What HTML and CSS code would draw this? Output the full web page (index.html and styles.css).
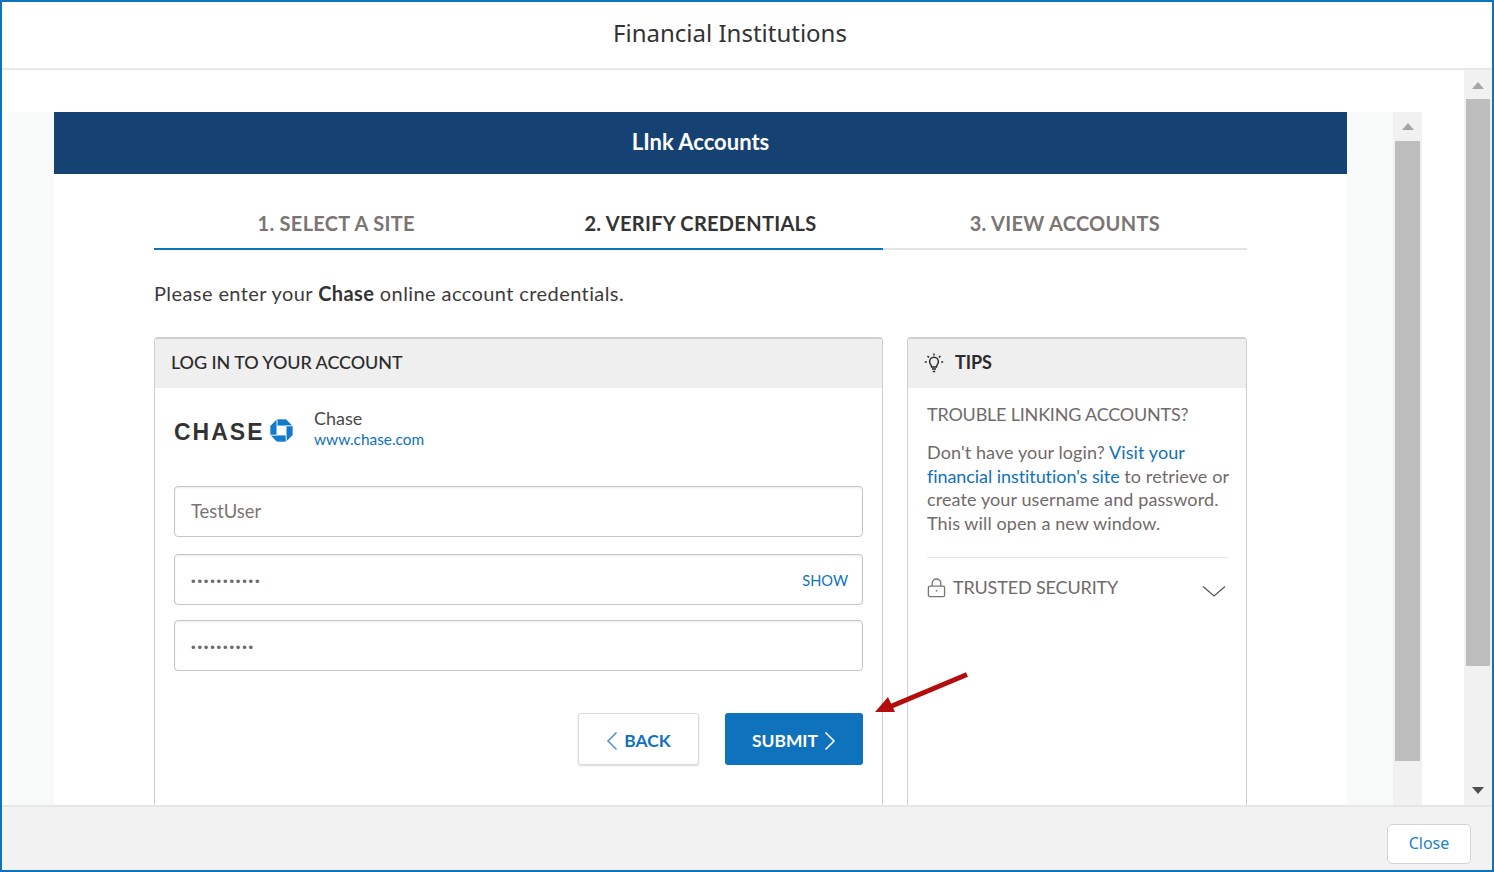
FILE: index.html
```html
<!DOCTYPE html>
<html lang="en">
<head>
<meta charset="utf-8">
<title>Financial Institutions</title>
<link rel="stylesheet" href="styles.css">
</head>
<body>
<div class="window">
  <header class="title"><h1>Financial Institutions</h1></header>
  <div class="main">
    <div class="view">
      <div class="frame">
        <div class="gutter">
          <div class="page">
            <div class="banner">LInk Accounts</div>
            <div class="tabs">
              <div class="tab done">1. SELECT A SITE</div>
              <div class="tab current">2. VERIFY CREDENTIALS</div>
              <div class="tab todo">3. VIEW ACCOUNTS</div>
            </div>
            <p class="lead">Please enter your <b>Chase</b> online account credentials.</p>
            <div class="columns">
              <section class="card login">
                <div class="card-head">LOG IN TO YOUR ACCOUNT</div>
                <div class="bank">
                  <div class="logo">
                    <span class="wordmark">CHASE</span>
                    <svg class="octagon" viewBox="0 0 100 100" aria-hidden="true">
                      <g fill="#117aca" stroke="#fff" stroke-width="3">
                        <polygon points="30,0 70,0 100,30 70,30 30,30"/>
                        <polygon points="100,30 100,70 70,100 70,70 70,30"/>
                        <polygon points="70,100 30,100 0,70 30,70 70,70"/>
                        <polygon points="0,70 0,30 30,0 30,30 30,70"/>
                      </g>
                    </svg>
                  </div>
                  <div class="bank-text">
                    <div class="bank-name">Chase</div>
                    <a class="bank-url">www.chase.com</a>
                  </div>
                </div>
                <div class="field first">TestUser</div>
                <div class="field second"><span class="dots">•••••••••••</span><a class="show">SHOW</a></div>
                <div class="field third"><span class="dots">••••••••••</span></div>
                <div class="actions">
                  <button class="btn back">
                    <svg class="chev" viewBox="0 0 12 20" aria-hidden="true"><path d="M10.5 1.5 2 10l8.500 8.500" fill="none" stroke="#5a93c9" stroke-width="1.600"/></svg>
                    BACK
                  </button>
                  <button class="btn submit">
                    SUBMIT
                    <svg class="chev" viewBox="0 0 12 20" aria-hidden="true"><path d="M1.500 1.500 10 10l-8.500 8.500" fill="none" stroke="#fff" stroke-width="1.600"/></svg>
                  </button>
                </div>
              </section>
              <aside class="card tips">
                <div class="card-head tips-head">
                  <svg class="bulb" viewBox="0 0 20 20" aria-hidden="true">
                    <g fill="none" stroke="#2b2b2b" stroke-width="1.500">
                      <path d="M7.600 14c0-2-2-2.800-2-5.300a4.400 4.400 0 0 1 8.800 0c0 2.500-2 3.300-2 5.300z"/>
                      <path d="M8 16h4M8.800 18.500h2.400"/>
                      <path d="M10 .5v2M3.500 3l1.500 1.500M16.500 3 15 4.500M.8 9h2M17.200 9h2"/>
                    </g>
                  </svg>
                  TIPS
                </div>
                <div class="tips-body">
                  <h2>TROUBLE LINKING ACCOUNTS?</h2>
                  <p>Don't have your login? <a>Visit your</a> <a class="tight">financial institution's site</a> to retrieve or create your username and password. This will open a new window.</p>
                  <div class="trusted">
                    <svg class="lock" viewBox="0 0 20 20" aria-hidden="true">
                      <g fill="none" stroke="#7a7573" stroke-width="1.400">
                        <rect x="1.500" y="8" width="17" height="11" rx="1.500"/>
                        <path d="M5.500 8V5a4.500 4.500 0 0 1 9 0v3"/>
                      </g>
                      <circle cx="10" cy="13" r="1" fill="#7a7573"/>
                    </svg>
                    <span class="trusted-label">TRUSTED SECURITY</span>
                    <svg class="down" viewBox="0 0 24 12" aria-hidden="true"><path d="M1 1.500 12 11 23 1.500" fill="none" stroke="#555" stroke-width="1.300"/></svg>
                  </div>
                </div>
              </aside>
            </div>
          </div>
        </div>
        <div class="scrollbar inner">
          <div class="arrow up"></div>
          <div class="thumb"></div>
        </div>
      </div>
    </div>
    <div class="scrollbar outer">
      <div class="arrow up"></div>
      <div class="thumb"></div>
      <div class="spacer"></div>
      <div class="arrow dn"></div>
    </div>
  </div>
  <footer class="footer"><button class="close">Close</button></footer>
  <svg class="pointer" viewBox="0 0 100 44" aria-hidden="true">
    <path d="M94 3.500 14 37" stroke="#b30d0d" stroke-width="5" fill="none"/>
    <polygon points="2,41 15,26 22,41" fill="#b30d0d"/>
  </svg>
</div>
</body>
</html>
```

FILE: styles.css
```css
* { box-sizing: border-box; }
html, body { margin: 0; padding: 0; height: 100%; overflow: hidden; background: #fff; }
body { font-family: "Lato", "Liberation Sans", sans-serif; color: #4a4746; font-variant-ligatures: none; }
a { color: #0f72bd; text-decoration: none; }

.window {
  position: relative;
  width: 1494px; height: 872px;
  border: 2px solid #0f72bd;
  display: flex; flex-direction: column;
}
.title {
  height: 68px; flex: none;
  border-bottom: 2px solid #e8e8e8;
  display: flex; align-items: center; justify-content: center;
  padding: 0 34px 6px 0;
}
.title h1 { margin: 0; font: 400 24px "Noto Sans", sans-serif; color: #333; }

.main { flex: 1; min-height: 0; display: flex; overflow: hidden; }
.view { flex: 1; min-width: 0; padding: 42px 42px 0 6px; }
.frame { height: 100%; display: flex; background: #f8f9f9; }
.gutter { flex: 1; min-width: 0; padding: 0 46px; overflow: hidden; }
.page { background: #fff; height: 100%; overflow: hidden; }

.banner {
  height: 62px; background: #154273; color: #fff;
  display: flex; align-items: center; justify-content: center;
  padding-bottom: 4px;
  font-size: 22px; font-weight: 700;
}
.tabs {
  display: grid; grid-template-columns: repeat(3, 1fr);
  margin: 26px 100px 0;
}
.tab {
  height: 50px; padding-top: 11px; text-align: center;
  font-size: 20px; font-weight: 700; color: #7a7573; letter-spacing: .3px;
  border-bottom: 2px solid #e4e4e4;
}
.tab.done, .tab.current { border-bottom-color: #0f72bd; }
.tab.current { color: #333; }

.lead { margin: 31px 100px 0; font-size: 20px; line-height: 24px; color: #3d3b3a; letter-spacing: .41px; }
.lead b { color: #333; }

.columns { display: flex; gap: 24px; margin: 32px 100px 0; height: 520px; }
.card { border: 1px solid #cfcfcf; border-top-width: 2px; border-radius: 4px 4px 0 0; }
.login { width: 729px; flex: none; }
.tips { flex: 1; min-width: 0; }
.card-head {
  height: 49px; background: #efefef; padding: 0 0 4px 16px;
  display: flex; align-items: center;
  font-size: 18px; font-weight: 500; color: #2b2b2b; letter-spacing: -.08px;
}
.tips-head { font-weight: 700; }

.bank { display: flex; align-items: center; height: 98px; padding: 0 0 16px 19px; }
.logo { width: 140px; display: flex; align-items: center; }
.wordmark {
  font: 700 23px "Liberation Sans", sans-serif;
  letter-spacing: 2px; color: #333;
  width: 96px; padding-top: 6px;
}
.octagon { width: 23px; height: 23px; margin-top: 3px; }
.bank-name { font-size: 18px; line-height: 22px; color: #4a4746; margin-top: -2px; }
.bank-url { font-size: 15.400px; line-height: 20px; display: block; }

.field {
  height: 51px; margin: 0 19px;
  border: 1px solid #c6c6c6; border-radius: 4px;
  box-shadow: inset 0 1px 2px rgba(0,0,0,.08);
  padding: 0 14px 0 16px;
  display: flex; align-items: center; justify-content: space-between;
  font-size: 18.400px; color: #7a7573;
}
.first { padding-bottom: 2px; }
.second { margin-top: 17px; }
.third { margin-top: 15px; }
.dots { font: 400 13px "Liberation Sans", sans-serif; letter-spacing: 1.850px; color: #6b6b6b; margin-top: 4px; }
.show { font-size: 14.600px; margin-top: 2px; }

.actions { display: flex; justify-content: flex-end; gap: 26px; margin: 42px 19px 0 0; }
.btn {
  height: 52px; border-radius: 3px; font: 700 17.400px "Lato", sans-serif;
  display: flex; align-items: center; justify-content: center; gap: 6px;
  padding: 2px 0 0;
}
.back { width: 121px; background: #fff; color: #0f72bd; border: 1px solid #dcdcdc; box-shadow: 0 1px 2px rgba(0,0,0,.15); }
.submit { width: 138px; background: #0f72bd; color: #fff; border: 0; }
.chev { width: 12px; height: 20px; margin-top: 2px; }

.bulb { width: 20px; height: 20px; margin: 2px 11px 0 0; flex: none; }
.tips-body { padding: 14px 18px 0 19px; color: #6f6b69; }
.tips-body h2 { margin: 0; font-size: 18px; line-height: 24px; font-weight: 400; letter-spacing: -.2px; }
.tips-body p { margin: 15px -10px 0 0; font-size: 18px; line-height: 23.700px; letter-spacing: .1px; }
.tight { letter-spacing: -.07px; }
.trusted {
  margin-top: 21px; padding-top: 18px;
  border-top: 1px solid #e8e8e8;
  display: flex; align-items: center;
}
.lock { width: 19px; height: 20px; flex: none; margin: 2px 7px 0 0; }
.trusted-label { font-size: 18px; flex: 1; letter-spacing: -.15px; }
.down { width: 24px; height: 12px; margin: 8px 2px 0 0; }

.scrollbar { background: #f1f1f1; flex: none; display: flex; flex-direction: column; align-items: center; }
.scrollbar.inner { width: 29px; }
.scrollbar.outer { width: 28px; height: 100%; }
.arrow { width: 0; height: 0; border-left: 6px solid transparent; border-right: 6px solid transparent; flex: none; }
.arrow.up { border-bottom: 7px solid #a6a6a6; }
.arrow.dn { border-top: 7px solid #505050; margin-bottom: 11px; }
.inner .arrow.up { margin-top: 11px; }
.outer .arrow.up { margin-top: 12px; }
.thumb { background: #bdbdbd; flex: none; }
.inner .thumb { width: 25px; height: 620px; margin-top: 11px; }
.outer .thumb { width: 24px; height: 567px; margin-top: 10px; }
.spacer { flex: 1; }

.footer {
  height: 65px; flex: none; background: #f2f2f2;
  border-top: 2px solid #e6e6e6;
  display: flex; justify-content: flex-end; align-items: flex-start;
  padding: 17px 21px 0 0;
}
.close {
  width: 84px; height: 40px; background: #fff;
  border: 1px solid #d4d4d4; border-radius: 5px;
  font: 400 16px "Noto Sans", sans-serif; color: #1f7fd0; padding: 0 0 2px;
}
.pointer { position: absolute; left: 871px; top: 669px; width: 100px; height: 44px; }
```
